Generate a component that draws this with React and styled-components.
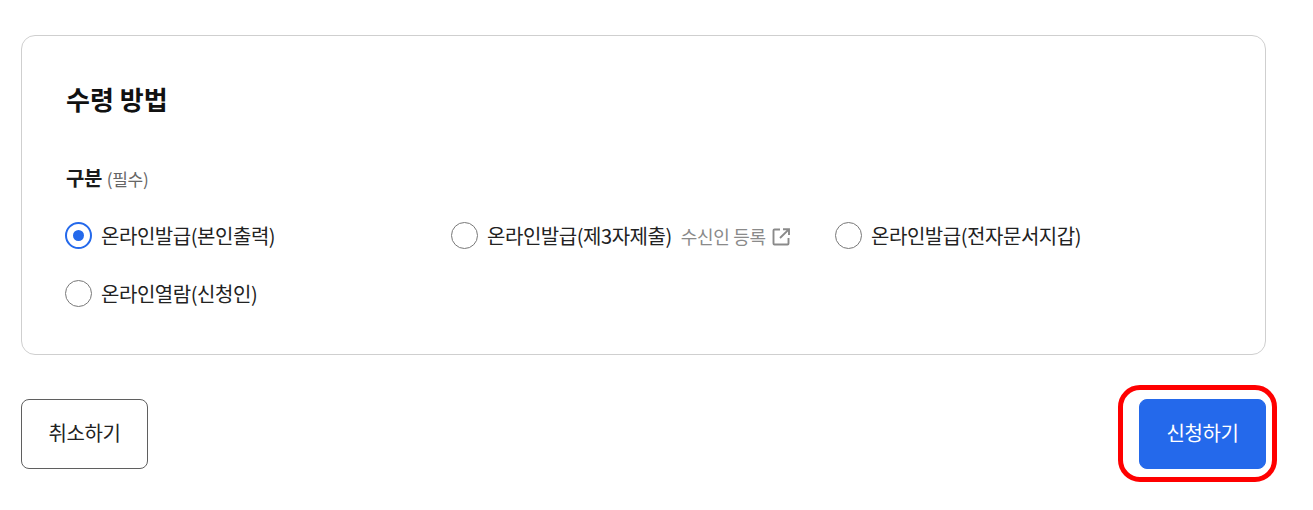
import React from 'react'
import styled, { createGlobalStyle } from 'styled-components'

const GlobalStyle = createGlobalStyle`
html, body {
  margin: 0;
  padding: 0;
  background: #fff;
}
body {
  font-family: "Noto Sans CJK KR", "Noto Sans", sans-serif;
  color: #1c1c1c;
}
`
const Page = styled.div`
  width: 1313px;
  height: 510px;
  padding: 35px 47px 0 21px;
  box-sizing: border-box;
  overflow: hidden;
`
const Card = styled.section`
  height: 320px;
  box-sizing: border-box;
  border: 1px solid #cfcfcf;
  border-radius: 14px;
  padding: 44px 43px 0;
`
const Title = styled.h2`
  margin: 0 0 0 1px;
  font-size: 26px;
  line-height: 38px;
  font-weight: 700;
  color: #111;
  letter-spacing: 0;
`
const FieldLabel = styled.div`
  margin: 46px 0 0 1px;
  display: flex;
  align-items: baseline;
  gap: 5px;
  line-height: 28px;
  font-size: 20px;
  font-weight: 700;
  letter-spacing: -0.5px;
  color: #1a1a1a;
`
const Required = styled.span`
  font-size: 17px;
  font-weight: 400;
  color: #666;
  letter-spacing: -0.3px;
`
const Options = styled.div`
  margin-top: 28px;
  display: grid;
  grid-template-columns: 386px 384px 1fr;
  grid-auto-rows: 58px;
`
const Option = styled.label`
  display: flex;
  align-items: center;
  height: 29px;
  font-size: 20px;
  letter-spacing: -0.45px;
  color: #222;
`
const Radio = styled.span`
  flex: none;
  width: 27px;
  height: 27px;
  box-sizing: border-box;
  border-radius: 50%;
  border: ${p => (p.$on ? '2px solid #2469eb' : '1.5px solid #787878')};
  display: flex;
  align-items: center;
  justify-content: center;
  margin-right: 9px;
  &::after {
    content: '';
    display: ${p => (p.$on ? 'block' : 'none')};
    width: 11px;
    height: 11px;
    border-radius: 50%;
    background: #2469eb;
  }
`
const ExternalLink = styled.span`
  display: flex;
  align-items: center;
  gap: 5px;
  margin-left: 9px;
  font-size: 18px;
  letter-spacing: -0.3px;
  color: #8a8a8a;
`
const LinkSvg = styled.svg`
  margin-top: 2px;
`
const Actions = styled.div`
  margin-top: 44px;
  display: flex;
  justify-content: space-between;
`
const Button = styled.button`
  position: relative;
  width: 127px;
  height: 70px;
  padding: 0 0 3px;
  box-sizing: border-box;
  border-radius: 8px;
  font-family: inherit;
  font-size: 20px;
  letter-spacing: -0.4px;
  border: ${p => (p.$primary ? '1px solid #2469eb' : '1.5px solid #5f5f5f')};
  background: ${p => (p.$primary ? '#2469eb' : '#fff')};
  color: ${p => (p.$primary ? '#fff' : '#222')};
`
const Highlight = styled.span`
  position: absolute;
  left: -22px;
  top: -15px;
  width: 159px;
  height: 97px;
  box-sizing: border-box;
  border: 5px solid #ff0000;
  border-radius: 22px;
  pointer-events: none;
`

const options = [
  { label: '온라인발급(본인출력)', checked: true },
  { label: '온라인발급(제3자제출)', link: '수신인 등록' },
  { label: '온라인발급(전자문서지갑)' },
  { label: '온라인열람(신청인)' },
]

function LinkIcon() {
  return (
    <LinkSvg width="20" height="20" viewBox="0 0 20 20" fill="none" stroke="#8a8a8a" strokeWidth="1.9">
      <path d="M9 2.5H3.5a1 1 0 0 0-1 1v13a1 1 0 0 0 1 1h13a1 1 0 0 0 1-1V11" />
      <path d="M12 2.2h6V8M17.8 2.4 9 11" />
    </LinkSvg>
  )
}

export default function App() {
  return (
    <Page>
      <GlobalStyle />
      <Card>
        <Title>수령 방법</Title>
        <FieldLabel>
          구분 <Required>(필수)</Required>
        </FieldLabel>
        <Options>
          {options.map(o => (
            <Option key={o.label}>
              <Radio $on={o.checked} />
              {o.label}
              {o.link && (
                <ExternalLink>
                  {o.link}
                  <LinkIcon />
                </ExternalLink>
              )}
            </Option>
          ))}
        </Options>
      </Card>
      <Actions>
        <Button>취소하기</Button>
        <Button $primary>
          신청하기
          <Highlight />
        </Button>
      </Actions>
    </Page>
  )
}
